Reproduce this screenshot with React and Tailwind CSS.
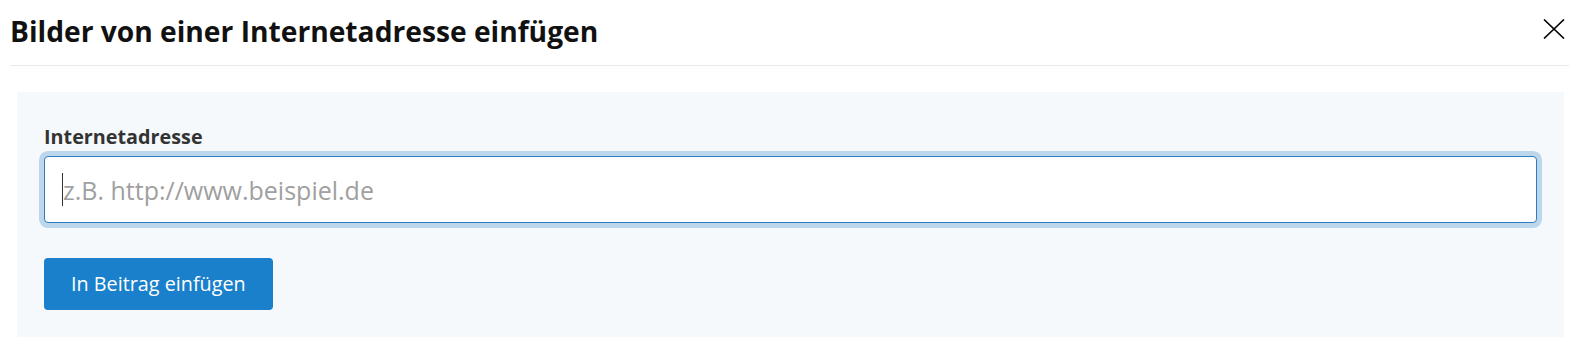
import React from 'react';

const App = () => {
  return (
    <div className="bg-white w-[1579px] h-[350px] font-['Open_Sans',sans-serif]">
      {/* Kopfzeile */}
      <div className="mx-[10px] h-[66px] border-b border-[#e9e9e9] flex items-center justify-between">
        <h2 className="text-[28.2px] font-bold text-[#111] leading-none pb-[2px]">
          Bilder von einer Internetadresse einfügen
        </h2>
        <button type="button" className="mr-[4px] mb-[8px] text-black" aria-label="Schließen">
          <svg width="22" height="20" viewBox="0 0 22 20" fill="none" stroke="currentColor" strokeWidth="1.6">
            <path d="M1 0.5L21 19.5M21 0.5L1 19.5" />
          </svg>
        </button>
      </div>

      {/* Formular */}
      <div className="ml-[17px] mr-[15px] mt-[26px] bg-[#f5f9fc] px-[27px] pt-[33px] pb-[27px]">
        <label className="block text-[19.8px] font-bold text-[#333] leading-[24px]">Internetadresse</label>
        <div className="relative mt-[7px]">
          <input
            type="text"
            placeholder="z.B. http://www.beispiel.de"
            className="w-full h-[67px] rounded-[4px] border border-[#2e7bbf] bg-white px-[18px] text-[25px] text-[#333] placeholder:text-[#a0a0a0] outline-none shadow-[0_0_0_5px_#bcd6eb]"
          />
          <span className="absolute left-[18px] top-[17px] w-px h-[33px] bg-[#333]"></span>
        </div>
        <button
          type="button"
          className="mt-[35px] h-[52px] px-[27px] rounded-[4px] bg-[#1a80cb] text-white text-[19.8px]"
        >
          In Beitrag einfügen
        </button>
      </div>
    </div>
  );
};

export default App;
